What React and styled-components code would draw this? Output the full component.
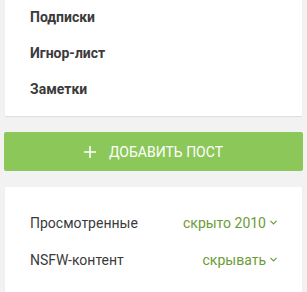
import React from "react";
import styled, { createGlobalStyle } from "styled-components";

const GlobalStyle = createGlobalStyle`
  html, body {
    margin: 0;
    padding: 0;
    background: #f2f2f2;
    font-family: Roboto, "Liberation Sans", sans-serif;
  }
`;

const Sidebar = styled.div`
  width: 299px;
  padding: 0 4px 0 4px;
  display: flex;
  flex-direction: column;
  gap: 16px;
  margin-top: -1px;
`;

const Card = styled.div`
  background: #fff;
  margin: 0 1px;
  box-shadow: 0 1px 1px rgba(0, 0, 0, 0.08);
  padding: ${(p) => p.$pad || "0"};
`;

const MenuLink = styled.a`
  display: block;
  padding: 0 25px;
  height: 36px;
  line-height: 36px;
  font-size: 14px;
  font-weight: 700;
  color: #3b3b3b;
  text-decoration: none;
`;

const AddButton = styled.button`
  height: 39px;
  border: none;
  border-radius: 2px;
  background: #8bc859;
  color: #fff;
  font-family: inherit;
  font-size: 14px;
  text-transform: uppercase;
  display: flex;
  align-items: center;
  justify-content: center;
  gap: 13px;
  cursor: pointer;
`;

const Row = styled.div`
  display: flex;
  align-items: center;
  justify-content: space-between;
  height: 37px;
  padding: 0 25px;
  font-size: 14px;
  color: #3b3b3b;
`;

const Value = styled.span`
  color: #6b9c38;
  display: flex;
  align-items: center;
  gap: 4px;
`;

const Plus = () => (
  <svg width="12" height="12" viewBox="0 0 12 12">
    <path d="M6 0v12M0 6h12" stroke="#fff" strokeWidth="1.6" />
  </svg>
);

const Chevron = () => (
  <svg width="7" height="5" viewBox="0 0 7 5">
    <path d="M0.5 0.8L3.5 3.8L6.5 0.8" stroke="#6b9c38" strokeWidth="1.2" fill="none" />
  </svg>
);

export default function App() {
  return (
    <>
      <GlobalStyle />
      <Sidebar>
        <Card $pad="0 0 9px">
          <MenuLink>Подписки</MenuLink>
          <MenuLink>Игнор-лист</MenuLink>
          <MenuLink>Заметки</MenuLink>
        </Card>
        <AddButton>
          <Plus />
          Добавить пост
        </AddButton>
        <Card $pad="17px 0 28px">
          <Row>
            Просмотренные
            <Value>
              скрыто 2010 <Chevron />
            </Value>
          </Row>
          <Row>
            NSFW-контент
            <Value>
              скрывать <Chevron />
            </Value>
          </Row>
        </Card>
      </Sidebar>
    </>
  );
}
